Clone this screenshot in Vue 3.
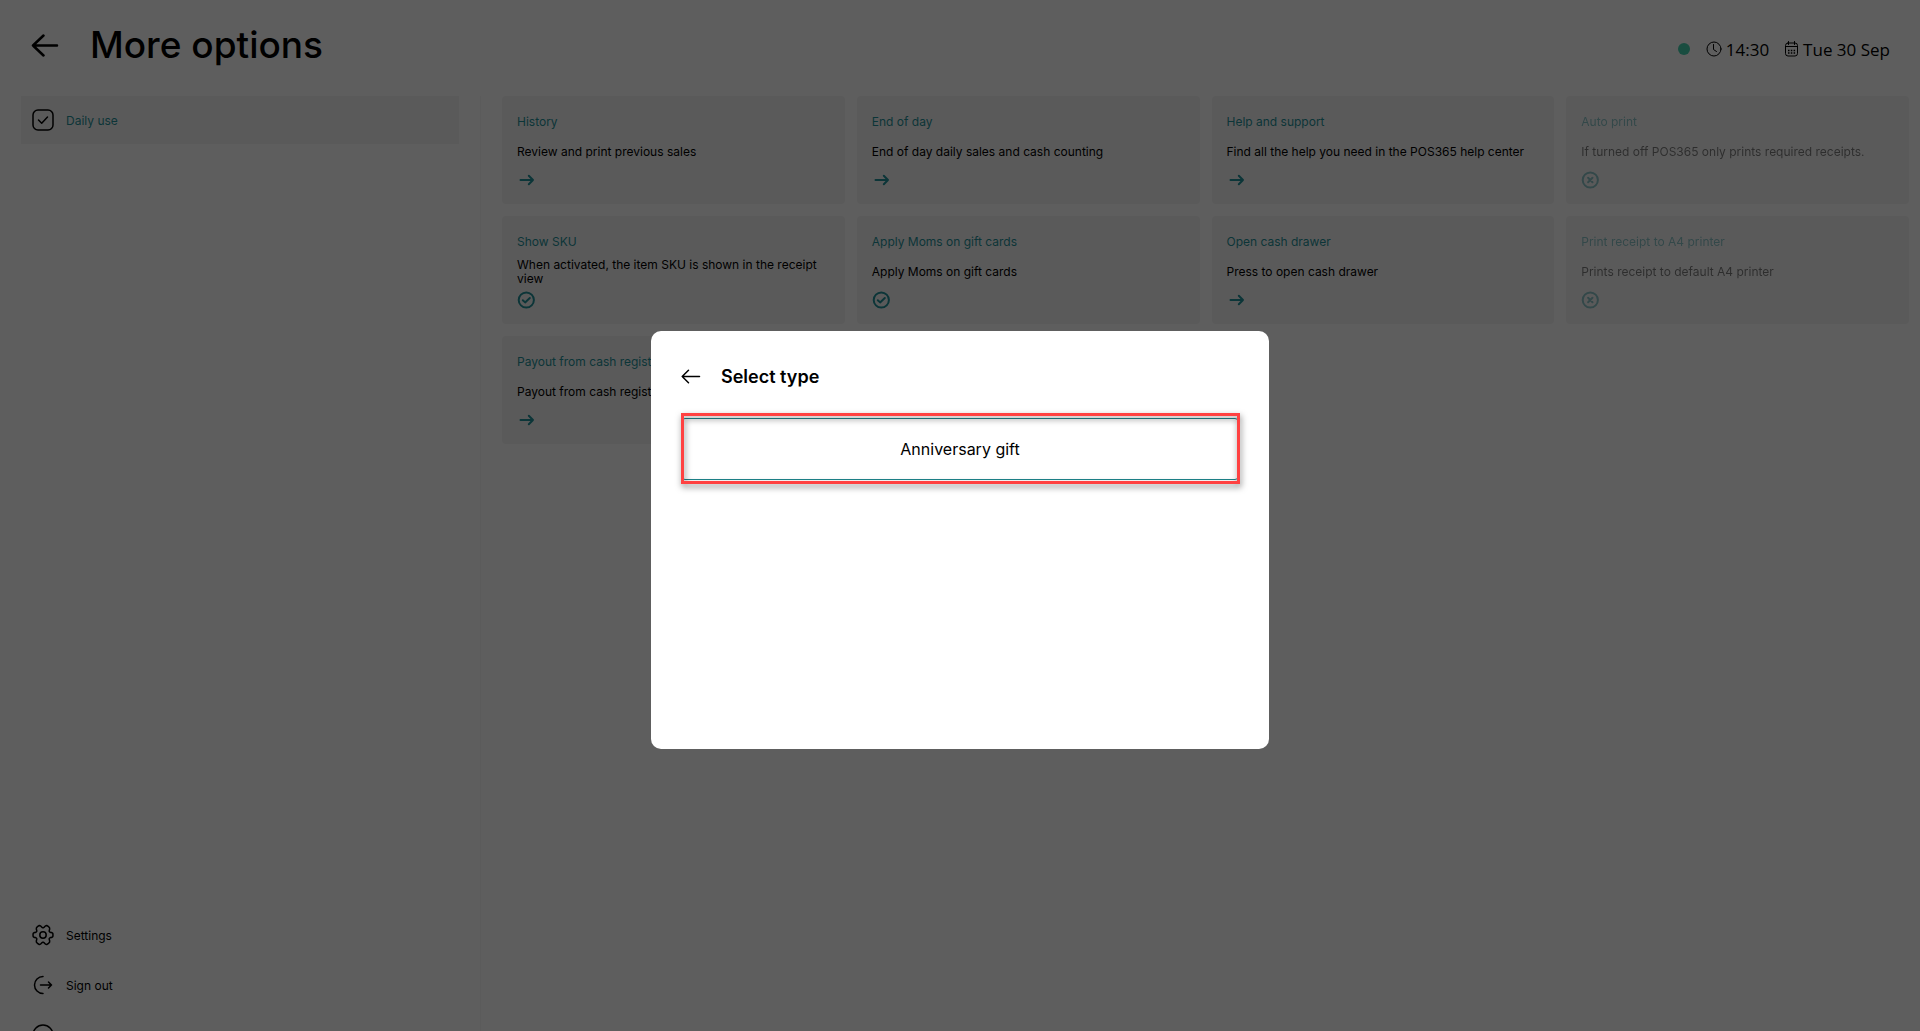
<script setup>
const cards = [
  { title: 'History', text: 'Review and print previous sales', icon: 'arrow' },
  { title: 'End of day', text: 'End of day daily sales and cash counting', icon: 'arrow' },
  { title: 'Help and support', text: 'Find all the help you need in the POS365 help center', icon: 'arrow' },
  { title: 'Auto print', text: 'If turned off POS365 only prints required receipts.', icon: 'off' },
  { title: 'Show SKU', text: 'When activated, the item SKU is shown in the receipt view', icon: 'on' },
  { title: 'Apply Moms on gift cards', text: 'Apply Moms on gift cards', icon: 'on' },
  { title: 'Open cash drawer', text: 'Press to open cash drawer', icon: 'arrow' },
  { title: 'Print receipt to A4 printer', text: 'Prints receipt to default A4 printer', icon: 'off' },
  { title: 'Payout from cash register', text: 'Payout from cash register', icon: 'arrow' },
]
</script>

<template>
  <div class="viewport">
    <div class="app">
      <header class="topbar">
        <button class="back" aria-label="Back">
          <svg width="28" height="24" viewBox="0 0 28 24"><path d="M26 12.5H2M12.5 2.500L2 12.5l10.500 10" stroke-width="2.5" /></svg>
        </button>
        <h1>More options</h1>
        <div class="status">
          <span class="dot"></span>
          <svg width="16" height="16" viewBox="0 0 16 16" stroke-width="1"><circle cx="8" cy="8" r="7" /><path d="M7.500 3.500V8.500l3 2" /></svg>
          <span class="time">14:30</span>
          <svg width="14" height="16" viewBox="0 0 14 16" stroke-width="1">
            <rect x="0.5" y="2" width="12" height="13" rx="2.500" />
            <path d="M.5 5.500h12M3.500 .5v3M9.500 .5v3" />
            <path class="dots" stroke-width="1.5" d="M3 9.500h1.500M5.800 9.500h1.500M8.600 9.500h1.500M3 12h1.500M5.800 12h1.500M8.600 12h1.500" />
          </svg>
          <span>Tue 30 Sep</span>
        </div>
      </header>

      <div class="body">
        <nav class="sidebar">
          <button class="item active">
            <svg width="22" height="22" viewBox="0 0 22 22" stroke-width="1.5"><rect x="1" y="1" width="20" height="20" rx="5" /><path d="M6.500 11l3.200 3.200L15.500 8" /></svg>
            <span>Daily use</span>
          </button>
          <div class="bottom">
            <button class="item">
              <svg width="22" height="22" viewBox="0 0 22 22" stroke-width="1.5">
                <path d="M21 11 L20.8 12.6 L19.8 13.4 L18.4 13.6 L17.6 14.1 L17.2 14.6 L17.3 15.6 L17.7 17 L17.5 18.3 L16.2 19.7 L14.7 20.5 L13.4 20.1 L12.3 18.9 L11.5 18.3 L10.5 18.3 L9.7 18.9 L8.6 20.1 L7.3 20.5 L5.8 19.7 L4.5 18.3 L4.3 17 L4.7 15.6 L4.8 14.6 L4.4 14.1 L3.6 13.6 L2.2 13.4 L1.2 12.6 L1 11 L1.2 9.4 L2.2 8.6 L3.6 8.4 L4.4 7.9 L4.8 7.4 L4.7 6.4 L4.3 5 L4.5 3.7 L5.8 2.3 L7.3 1.5 L8.6 1.9 L9.7 3.1 L10.5 3.7 L11.5 3.7 L12.3 3.1 L13.4 1.9 L14.7 1.5 L16.2 2.3 L17.5 3.7 L17.7 5 L17.3 6.4 L17.2 7.4 L17.6 7.9 L18.4 8.4 L19.8 8.6 L20.8 9.4Z" />
                <circle cx="11" cy="11" r="3.200" />
              </svg>
              <span>Settings</span>
            </button>
            <button class="item">
              <svg width="22" height="22" viewBox="0 0 22 22" stroke-width="1.5"><path d="M11 2.500a8.300 8.300 0 0 0 0 17M8.500 11h11M16.500 8l3 3-3 3" /></svg>
              <span>Sign out</span>
            </button>
            <button class="item" aria-label="Account">
              <svg width="22" height="22" viewBox="0 0 22 22" stroke-width="1.5"><circle cx="11" cy="11" r="10" /></svg>
            </button>
          </div>
        </nav>

        <main class="grid">
          <button v-for="card in cards" :key="card.title" class="card" :class="{ off: card.icon === 'off' }">
            <span class="card-title">{{ card.title }}</span>
            <span class="card-text">{{ card.text }}</span>
            <svg width="18" height="18" viewBox="0 0 18 18" stroke-width="2">
              <path v-if="card.icon === 'arrow'" d="M3.500 9H16M11.800 4.700L16 9l-4.200 4.300" />
              <template v-else>
                <circle cx="9.300" cy="9" r="7.600" />
                <path v-if="card.icon === 'on'" d="M5.800 9.200l2.300 2.200 4.700-4.400" />
                <path v-else d="M7.100 6.800l4.400 4.400M11.500 6.800l-4.400 4.400" />
              </template>
            </svg>
          </button>
        </main>
      </div>

      <div class="backdrop">
        <section class="dialog" role="dialog" aria-labelledby="dialog-title">
          <div class="dialog-head">
            <button class="dialog-back" aria-label="Back">
              <svg width="20" height="16" viewBox="0 0 20 16" stroke-width="1.5"><path d="M18.500 7.500H1.200M7.500 1.200L1.200 7.500l6.300 6.300" /></svg>
            </button>
            <h2 id="dialog-title">Select type</h2>
          </div>
          <div class="choice">
            <button class="option">Anniversary gift</button>
            <span class="frame"></span>
          </div>
        </section>
      </div>
    </div>
  </div>
</template>

<style>
body {
  margin: 0;
}
</style>

<style scoped>
.viewport {
  height: 100vh;
  overflow: hidden;
}
.app {
  --teal: #1e858c;
  position: relative;
  display: flex;
  flex-direction: column;
  height: calc(100vh + 49px);
  background: #ebebeb;
  color: #000;
  font-family: Inter, "Liberation Sans", sans-serif;
  font-size: 12px;
}
button {
  margin: 0;
  padding: 0;
  border: 0;
  background: none;
  color: inherit;
  font: inherit;
  text-align: left;
}
svg {
  display: block;
  flex: none;
  fill: none;
  stroke: currentColor;
  stroke-linecap: round;
  stroke-linejoin: round;
}
.topbar {
  display: flex;
  align-items: center;
  box-sizing: border-box;
  height: 96px;
  padding: 0 30px 6px 31px;
}
h1 {
  margin: 0 0 0 31px;
  font-size: 37px;
  line-height: 44px;
  font-weight: 500;
}
.status {
  display: flex;
  align-items: center;
  gap: 4px;
  margin-left: auto;
  padding-top: 8px;
  font-family: "Open Sans", "Noto Sans", sans-serif;
  font-size: 17px;
}
.status .dots {
  stroke-linecap: butt;
}
.dot {
  width: 12px;
  height: 12px;
  margin-right: 12px;
  border-radius: 50%;
  background: #3fc0a0;
}
.time {
  margin-right: 12px;
}
.body {
  display: flex;
  flex: 1;
}
.sidebar {
  display: flex;
  flex-direction: column;
  box-sizing: border-box;
  width: 25%;
  padding: 0 21px 21px;
}
.item {
  display: flex;
  align-items: center;
  gap: 12px;
  width: 100%;
  height: 48px;
  padding-left: 11px;
}
.active {
  background: #e2e2e2;
}
.active span {
  color: var(--teal);
}
.bottom {
  display: flex;
  flex-direction: column;
  gap: 2px;
  margin-top: auto;
}
.grid {
  flex: 1;
  display: grid;
  grid-template-columns: repeat(4, 1fr);
  grid-auto-rows: 108px;
  gap: 12px;
  padding: 0 11px 0 21px;
  border-left: 1px solid #e4e4e4;
}
.card {
  display: grid;
  grid-template-rows: 20px 40px 16px;
  align-content: start;
  align-items: center;
  padding: 16px 15px 0;
  border-radius: 4px;
  background: #e2e2e2;
  line-height: 14px;
}
.card svg {
  color: var(--teal);
}
.card-title {
  color: var(--teal);
}
.off > * {
  opacity: 0.5;
}
.backdrop {
  position: absolute;
  inset: 0;
  display: flex;
  align-items: center;
  justify-content: center;
  background: rgba(0, 0, 0, 0.6);
}
.dialog {
  box-sizing: border-box;
  width: 618px;
  height: 418px;
  padding: 30px;
  border-radius: 10px;
  background: #fff;
}
.dialog-head {
  display: flex;
  align-items: center;
  gap: 20px;
  height: 32px;
}
h2 {
  margin: 0;
  font-size: 18px;
  line-height: 24px;
  font-weight: 600;
}
.choice {
  position: relative;
  margin: 25px 0 0;
}
.option {
  display: block;
  box-sizing: border-box;
  width: 100%;
  height: 62px;
  border: 1px solid var(--teal);
  border-radius: 4px;
  font-size: 16px;
  text-align: center;
}
.frame {
  position: absolute;
  inset: -5px -1px -4px 0;
  border: 3px solid #ff4141;
  filter: drop-shadow(1px 3px 3px rgba(0, 0, 0, 0.5));
  pointer-events: none;
}
</style>
